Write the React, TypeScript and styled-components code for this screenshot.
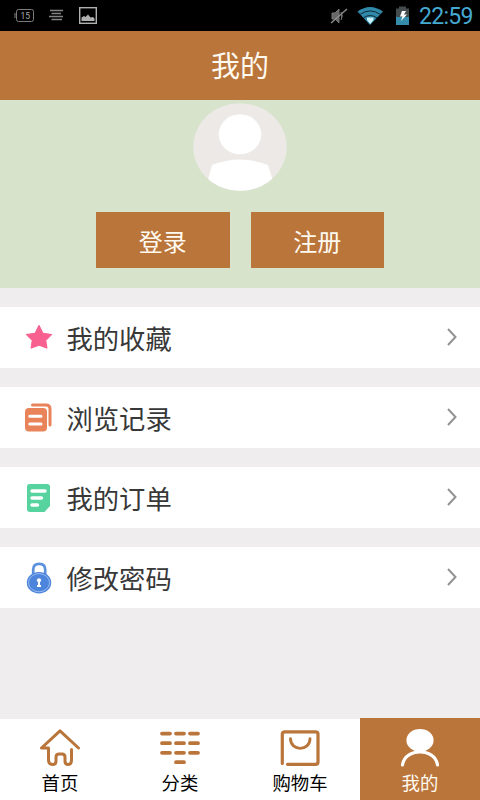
import React from 'react';
import styled, { createGlobalStyle } from 'styled-components';

const brown = '#ba753b';

const GlobalStyle = createGlobalStyle`
  * { box-sizing: border-box; }
  body { margin: 0; background: #efedee; }
  button { border: 0; padding: 0; font: inherit; }
`;

const Screen = styled.div`
  display: flex;
  flex-direction: column;
  width: 480px;
  height: 800px;
  background: #efedee;
  font-family: 'Noto Sans CJK SC', sans-serif;
  overflow: hidden;
`;

const StatusBar = styled.div`
  display: flex;
  justify-content: space-between;
  flex: none;
  height: 31px;
  background: #000;
`;

const StatusRight = styled.div`
  display: flex;
`;

const Clock = styled.time`
  width: 61px;
  font: 23px/33px Roboto, sans-serif;
  letter-spacing: -0.7px;
  color: #45a9d2;
  white-space: nowrap;
`;

const Header = styled.header`
  flex: none;
  height: 69px;
  background: ${brown};
  color: #fffaf0;
  font-size: 29px;
  line-height: 67px;
  text-align: center;
`;

const Profile = styled.section`
  display: flex;
  flex-direction: column;
  align-items: center;
  flex: none;
  height: 188px;
  padding-top: 3px;
  background: #d7e4cb;
`;

const Avatar = styled.svg`
  display: block;
  width: 94px;
  height: 88px;
`;

const Actions = styled.div`
  display: flex;
  gap: 21px;
  margin-top: 21px;
`;

const ActionButton = styled.button`
  width: 133.5px;
  height: 56px;
  background: ${brown};
  color: #fffaf0;
  font-size: 24px;
  line-height: 57px;
`;

const Menu = styled.main`
  display: flex;
  flex-direction: column;
  flex: 1;
  gap: 19px;
  padding-top: 19px;
`;

const MenuRow = styled.div`
  display: flex;
  align-items: center;
  height: 61px;
  padding: 0 22px 0 22px;
  background: #fff;
`;

const MenuIcon = styled.svg`
  width: 34px;
  height: 40px;
`;

const MenuLabel = styled.span`
  flex: 1;
  margin-left: 10.5px;
  color: #383838;
  font-size: 26.3px;
  line-height: 60px;
  white-space: nowrap;
`;

const Chevron = styled.svg`
  width: 12px;
  height: 20px;
  margin-bottom: 1px;
`;

const TabBar = styled.nav`
  display: grid;
  grid-template-columns: repeat(4, 1fr);
  flex: none;
  height: 82px;
`;

const Tab = styled.div<{ $active?: boolean }>`
  display: flex;
  flex-direction: column;
  align-items: center;
  padding-top: ${(p) => (p.$active ? '8px' : '7px')};
  border-top: ${(p) => (p.$active ? '0' : '1px solid #efedee')};
  background: ${(p) => (p.$active ? brown : '#fff')};
  color: ${(p) => (p.$active ? '#fffaf0' : '#000')};
`;

const TabIcon = styled.svg`
  width: 44px;
  height: 44px;
`;

const TabLabel = styled.span`
  margin-top: -1px;
  font-size: 18.4px;
  line-height: 26px;
`;

const menu = [
  {
    label: '我的收藏',
    icon: (
      <path
        d="M17 7.3 21 15.3 29.8 16.5 23.8 22.6 25 30.2 17 27.2 9 30.2 10.2 22.6 4.2 16.5 13 15.3Z"
        fill="#f8608f"
        stroke="#f8608f"
        strokeLinejoin="round"
      />
    ),
  },
  {
    label: '浏览记录',
    icon: (
      <>
        <path d="M10.5 7H24Q28 7 28 11V27" fill="none" stroke="#e98359" strokeWidth="3" strokeLinecap="round" />
        <rect x="3" y="10" width="22" height="23.5" rx="4" fill="#e98359" />
        <path d="M7.8 18.2H19M7.8 26H19" stroke="#fff" strokeWidth="3" strokeLinecap="round" />
      </>
    ),
  },
  {
    label: '我的订单',
    icon: (
      <>
        <path d="M7.5 6H25Q28 6 28 9V28L22.5 34H8Q5 34 5 31V9Q5 6 7.5 6Z" fill="#57d3a0" />
        <path d="M10 13H23M10 20H19.5M10 27H15.5" stroke="#fff" strokeWidth="3.4" strokeLinecap="round" />
      </>
    ),
  },
  {
    label: '修改密码',
    icon: (
      <>
        <path d="M11.2 18V11.5Q11.2 5.8 17.2 5.8T23.2 11.5V18" fill="none" stroke="#5b90dc" strokeWidth="2.7" />
        <ellipse cx="17" cy="24.7" rx="12.2" ry="10.8" fill="#4d85dc" />
        <ellipse cx="17" cy="24.7" rx="10.5" ry="9.1" fill="none" stroke="#a8c6f2" strokeWidth=".8" />
        <circle cx="17" cy="22.3" r="2.1" fill="#fff" />
        <path d="M16 23H18V27H19V29H15V27H16Z" fill="#fff" />
      </>
    ),
  },
];

const tabs = [
  {
    label: '首页',
    icon: (
      <path
        d="M3.5 22 22 4.8 40.5 22M3.5 22H10.5V34Q10.5 38.5 15 38.5Q18 38.5 18 35V31Q18 28 21 28H24Q27 28 27 31V35Q27 38.5 30 38.5Q33.5 38.5 33.5 34V23.5"
        stroke={brown}
        strokeWidth="3"
        fill="none"
        strokeLinecap="round"
        strokeLinejoin="round"
      />
    ),
  },
  {
    label: '分类',
    icon: (
      <path
        d="M4 7.6H12M18 7.6H26M32 7.6H40M4 17.2H12M18 17.2H26M32 17.2H40M4 26.8H12M18 26.8H26M32 26.8H40M18 36.2H26"
        stroke={brown}
        strokeWidth="3.8"
        strokeLinecap="round"
      />
    ),
  },
  {
    label: '购物车',
    icon: (
      <g fill="none" stroke={brown} strokeLinecap="round">
        <path d="M4.3 37.5V8Q4.3 5.8 7 5.8H37.5Q40 5.8 40 8V36Q40 38.3 37.5 38.3H9.5" strokeWidth="3.2" />
        <path d="M12.5 12.8C12.5 25.5 32 25.5 32 12.8" strokeWidth="2.9" />
      </g>
    ),
  },
  {
    label: '我的',
    active: true,
    icon: (
      <>
        <ellipse cx="22" cy="14.3" rx="13.6" ry="11.3" fill="#fff" />
        <path d="M17 23H27L29 28H15Z" fill="#fff" />
        <path d="M4.5 39C7 21.5 37 21.5 39.5 39" fill={brown} stroke="#fff" strokeWidth="3.2" strokeLinecap="round" />
      </>
    ),
  },
];

export default function App() {
  return (
    <Screen>
      <GlobalStyle />
      <StatusBar>
        <svg width="110" height="31" viewBox="0 0 110 31">
          <rect x="16.5" y="9.5" width="17" height="12" rx="2" fill="none" stroke="#7c7c7c" />
          <path d="M15 13V18" stroke="#7c7c7c" />
          <text x="20.5" y="18.8" fontSize="8.5" fontFamily="Roboto, sans-serif" fill="#aaa">15</text>
          <path d="M50 10.5H63M51.5 13.5H61M49 16.5H63M51.5 19.5H62" stroke="#858585" strokeWidth="1.3" />
          <rect x="79.7" y="7.7" width="16.6" height="15.6" fill="none" stroke="#b0b0b0" strokeWidth="1.4" />
          <path d="M81.5 21V17.5L84 16 85.5 17 88 14.5 90.5 17.5 93 17 94.5 18.5V21Z" fill="#b0b0b0" />
        </svg>
        <StatusRight>
          <svg width="99" height="31" viewBox="320 0 99 31">
            <path d="M332 13H335L339 9V23L335 19H332ZM341 12Q343.5 16 341 20" fill="#666" stroke="#777" />
            <path d="M331 23 347 9" stroke="#8d8d8d" strokeWidth="1.4" />
            <path d="M357.5 11.5Q370 2.5 383 11.5L370 25Z" fill="#3189aa" />
            <path d="M360.2 14.3Q370 7.5 380.3 14.3M363.5 17.8Q370 13.3 377 17.8" fill="none" stroke="#0c2a37" strokeWidth="1" />
            <path d="M367 17.5H373.5V20L370.3 24 367 20Z" fill="#c9f2fb" />
            <path d="M396 8.5H399V6.5H406V8.5H409V25H396Z" fill="#444b4d" />
            <path d="M396 17H409V25H396Z" fill="#368cab" />
            <path d="M402 11H406L404 14.5H407L401 21 402.5 16.5H400Z" fill="#fff" />
          </svg>
          <Clock>22:59</Clock>
        </StatusRight>
      </StatusBar>
      <Header>我的</Header>
      <Profile>
        <Avatar viewBox="0 0 94 88">
          <defs>
            <clipPath id="avatar">
              <ellipse cx="47" cy="44" rx="46.7" ry="43.8" />
            </clipPath>
          </defs>
          <g clipPath="url(#avatar)">
            <rect width="94" height="88" fill="#ece9e7" />
            <ellipse cx="47" cy="31.3" rx="21.3" ry="20" fill="#fff" />
            <path d="M12 88 19 62Q47 51 75 62L83 88Z" fill="#fff" />
          </g>
        </Avatar>
        <Actions>
          <ActionButton>登录</ActionButton>
          <ActionButton>注册</ActionButton>
        </Actions>
      </Profile>
      <Menu>
        {menu.map((item) => (
          <MenuRow key={item.label}>
            <MenuIcon viewBox="0 0 34 40">{item.icon}</MenuIcon>
            <MenuLabel>{item.label}</MenuLabel>
            <Chevron viewBox="0 0 12 20">
              <path d="M2 2 9.5 10 2 18" fill="none" stroke="#929292" strokeWidth="2" />
            </Chevron>
          </MenuRow>
        ))}
      </Menu>
      <TabBar>
        {tabs.map((tab) => (
          <Tab key={tab.label} $active={tab.active}>
            <TabIcon viewBox="0 0 44 44">{tab.icon}</TabIcon>
            <TabLabel>{tab.label}</TabLabel>
          </Tab>
        ))}
      </TabBar>
    </Screen>
  );
}
